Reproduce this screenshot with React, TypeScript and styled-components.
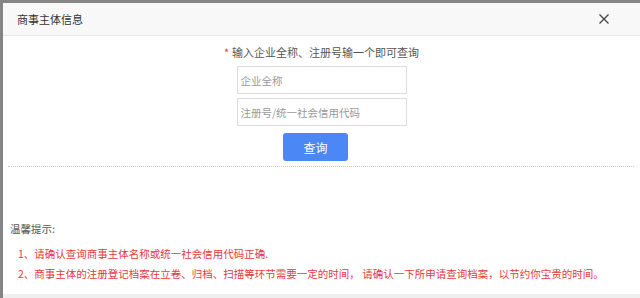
import styled, { createGlobalStyle } from 'styled-components';

const GlobalStyle = createGlobalStyle`
  html, body {
    margin: 0;
    padding: 0;
    background: #858585;
    overflow: hidden;
  }
  body {
    font-family: "Noto Sans CJK SC", "Noto Sans", sans-serif;
  }
  * {
    box-sizing: border-box;
  }
`;

const Page = styled.div`
  width: 640px;
  height: 298px;
  padding: 3px 0 0 3px;
  display: flex;
  flex-direction: column;
`;

const Dialog = styled.div`
  flex: 1;
  display: flex;
  flex-direction: column;
  background: #fff;
`;

const Header = styled.div`
  height: 33px;
  display: flex;
  align-items: center;
  justify-content: space-between;
  padding: 0 30px 0 14px;
  background: #f8f8f8;
  border-bottom: 1px solid #e8e8e8;
`;

const Title = styled.div`
  font-size: 11px;
  color: #333;
  line-height: 1;
`;

const CloseBtn = styled.button`
  border: 0;
  padding: 0;
  background: transparent;
  display: flex;
  width: 12px;
  height: 12px;
  color: #444;
  cursor: pointer;
`;

const Body = styled.div`
  flex: 1;
  display: flex;
  flex-direction: column;
`;

const Form = styled.div`
  display: flex;
  flex-direction: column;
  align-items: center;
  padding-top: 8px;
`;

const Label = styled.div`
  font-size: 11px;
  line-height: 16px;
  color: #555;
  margin-bottom: 6px;
`;

const Required = styled.span`
  color: #e4393c;
  margin-right: 3px;
`;

const Input = styled.input`
  width: 170px;
  height: 28px;
  margin-bottom: 4px;
  padding: 0 3px;
  border: 1px solid #dcdcdc;
  border-radius: 0;
  font-family: inherit;
  font-size: 10.5px;
  color: #333;
  outline: none;

  &::placeholder {
    color: #999;
  }
`;

const SearchBtn = styled.button`
  width: 65px;
  height: 28px;
  margin: 3px 12px 0 0;
  border: 0;
  border-radius: 3px;
  background: #4b88f6;
  color: #fff;
  font-family: inherit;
  font-size: 12px;
  cursor: pointer;
`;

const Divider = styled.div`
  margin: 5px 6px 0 5px;
  border-top: 1px dotted #c8c8c8;
`;

const Tips = styled.div`
  margin-top: auto;
  padding: 0 0 10px 7px;
  display: flex;
  flex-direction: column;
`;

const TipsTitle = styled.div`
  font-size: 10.5px;
  line-height: 20px;
  color: #555;
  margin-bottom: 5px;
`;

const TipLine = styled.div`
  padding-left: 8px;
  font-size: 10.5px;
  line-height: 20px;
  color: #e4393c;
  white-space: nowrap;
`;

const Footer = styled.div`
  height: 4px;
  background: #efefef;
`;

const tips = [
  '1、请确认查询商事主体名称或统一社会信用代码正确.',
  '2、商事主体的注册登记档案在立卷、归档、扫描等环节需要一定的时间， 请确认一下所申请查询档案，以节约你宝贵的时间。',
];

export default function App() {
  return (
    <>
      <GlobalStyle />
      <Page>
        <Dialog>
          <Header>
            <Title>商事主体信息</Title>
            <CloseBtn aria-label="关闭">
              <svg width="12" height="12" viewBox="0 0 12 12">
                <path d="M1.5 1.5L10.5 10.5M10.5 1.5L1.5 10.5" stroke="currentColor" strokeWidth="1.3" />
              </svg>
            </CloseBtn>
          </Header>
          <Body>
            <Form>
              <Label>
                <Required>*</Required>输入企业全称、注册号输一个即可查询
              </Label>
              <Input placeholder="企业全称" />
              <Input placeholder="注册号/统一社会信用代码" />
              <SearchBtn>查询</SearchBtn>
            </Form>
            <Divider />
            <Tips>
              <TipsTitle>温馨提示:</TipsTitle>
              {tips.map((t) => (
                <TipLine key={t}>{t}</TipLine>
              ))}
            </Tips>
          </Body>
        </Dialog>
        <Footer />
      </Page>
    </>
  );
}
